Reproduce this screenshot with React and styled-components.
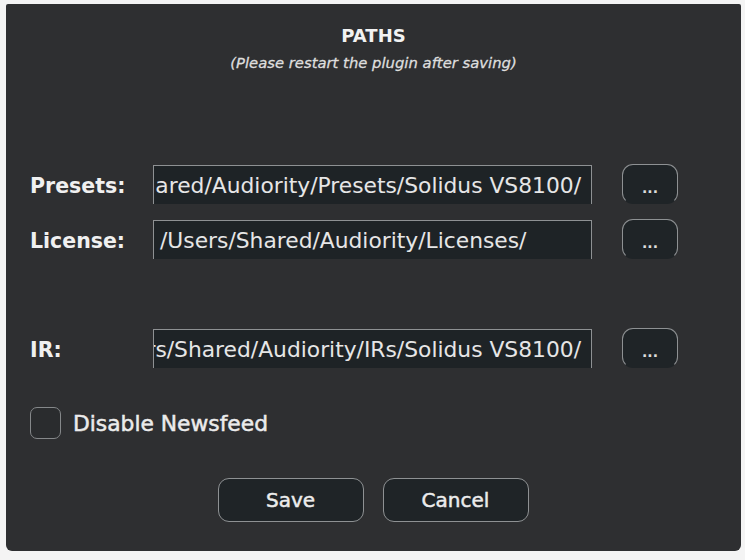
import React, { useState } from 'react';
import styled, { createGlobalStyle } from 'styled-components';

const GlobalStyle = createGlobalStyle`
  html, body {
    margin: 0;
    padding: 0;
    background: #f4f4f4;
  }
  body {
    font-family: "DejaVu Sans", "Open Sans", sans-serif;
  }
`;

const Dialog = styled.div`
  box-sizing: border-box;
  width: 735px;
  height: 547px;
  margin: 4px 0 0 6px;
  background: #2e2f31;
  border-radius: 2px 2px 6px 6px;
  padding: 21px 24px 0 24px;
  display: flex;
  flex-direction: column;
  color: #ececec;
`;

const Header = styled.div`
  display: flex;
  flex-direction: column;
  align-items: center;
`;

const Title = styled.h1`
  margin: 0;
  font-size: 18px;
  font-weight: 700;
  line-height: 22px;
  color: #f2f2f2;
`;

const Subtitle = styled.p`
  margin: 7px 0 0;
  font-size: 14.8px;
  font-style: italic;
  line-height: 18px;
  color: #dedede;
  -webkit-text-stroke: 0.3px #dedede;
`;

const PathList = styled.div`
  display: flex;
  flex-direction: column;
  margin-top: 92px;
`;

const PathRow = styled.div`
  display: grid;
  grid-template-columns: 123px 439px 86px;
  align-items: center;
  height: 40px;
  margin-top: ${(p) => p.$gap || 0}px;
`;

const Label = styled.span`
  font-size: 20.5px;
  font-weight: 700;
  color: #f0f0f0;
  padding-top: 3px;
`;

const Field = styled.div`
  box-sizing: border-box;
  height: 39px;
  background: #1e2326;
  border: 1.5px solid #8e9193;
  border-bottom: none;
  padding: 2px 10px 0 ${(p) => (p.$scrolled ? 0 : 6)}px;
  display: flex;
  align-items: center;
  justify-content: ${(p) => (p.$scrolled ? 'flex-end' : 'flex-start')};
  overflow: hidden;
  white-space: nowrap;
  font-size: 21.8px;
  color: #e6e6e6;
`;

const BrowseButton = styled.button`
  box-sizing: border-box;
  justify-self: end;
  height: 40px;
  width: 56px;
  background: #1f2427;
  border: 1.5px solid #8e9193;
  border-bottom-color: transparent;
  border-radius: 11px;
  color: #dcdcdc;
  font-family: inherit;
  font-size: 14px;
  font-weight: 700;
  padding: 8px 0 0;
  cursor: pointer;
`;

const CheckRow = styled.label`
  display: flex;
  align-items: center;
  gap: 12px;
  margin-top: 39px;
  cursor: pointer;
`;

const CheckBox = styled.span`
  box-sizing: border-box;
  width: 31px;
  height: 32px;
  border: 1.5px solid #85888a;
  border-radius: 7px;
  background: ${(p) => (p.$checked ? '#5a6c78' : '#2a2c2e')};
`;

const CheckText = styled.span`
  font-size: 21.8px;
  color: #ebebeb;
  -webkit-text-stroke: 0.5px #ebebeb;
`;

const Actions = styled.div`
  display: flex;
  justify-content: center;
  gap: 19px;
  margin-top: 39px;
  margin-left: -1px;
`;

const ActionButton = styled.button`
  box-sizing: border-box;
  width: 146px;
  height: 44px;
  background: #1f2427;
  border: 1.5px solid #8e9193;
  border-radius: 11px;
  color: #ececec;
  font-family: inherit;
  font-size: 20px;
  -webkit-text-stroke: 0.5px #ececec;
  cursor: pointer;
`;

const paths = [
  { label: 'Presets:', value: '/Users/Shared/Audiority/Presets/Solidus VS8100/', scrolled: true, gap: 0 },
  { label: 'License:', value: '/Users/Shared/Audiority/Licenses/', scrolled: false, gap: 15 },
  { label: 'IR:', value: '/Users/Shared/Audiority/IRs/Solidus VS8100/', scrolled: true, gap: 69 },
];

export default function App() {
  const [disabled, setDisabled] = useState(false);

  return (
    <>
      <GlobalStyle />
      <Dialog>
        <Header>
          <Title>PATHS</Title>
          <Subtitle>(Please restart the plugin after saving)</Subtitle>
        </Header>

        <PathList>
          {paths.map((p) => (
            <PathRow key={p.label} $gap={p.gap}>
              <Label>{p.label}</Label>
              <Field $scrolled={p.scrolled}>{p.value}</Field>
              <BrowseButton>...</BrowseButton>
            </PathRow>
          ))}
        </PathList>

        <CheckRow onClick={() => setDisabled(!disabled)}>
          <CheckBox $checked={disabled} />
          <CheckText>Disable Newsfeed</CheckText>
        </CheckRow>

        <Actions>
          <ActionButton>Save</ActionButton>
          <ActionButton>Cancel</ActionButton>
        </Actions>
      </Dialog>
    </>
  );
}
